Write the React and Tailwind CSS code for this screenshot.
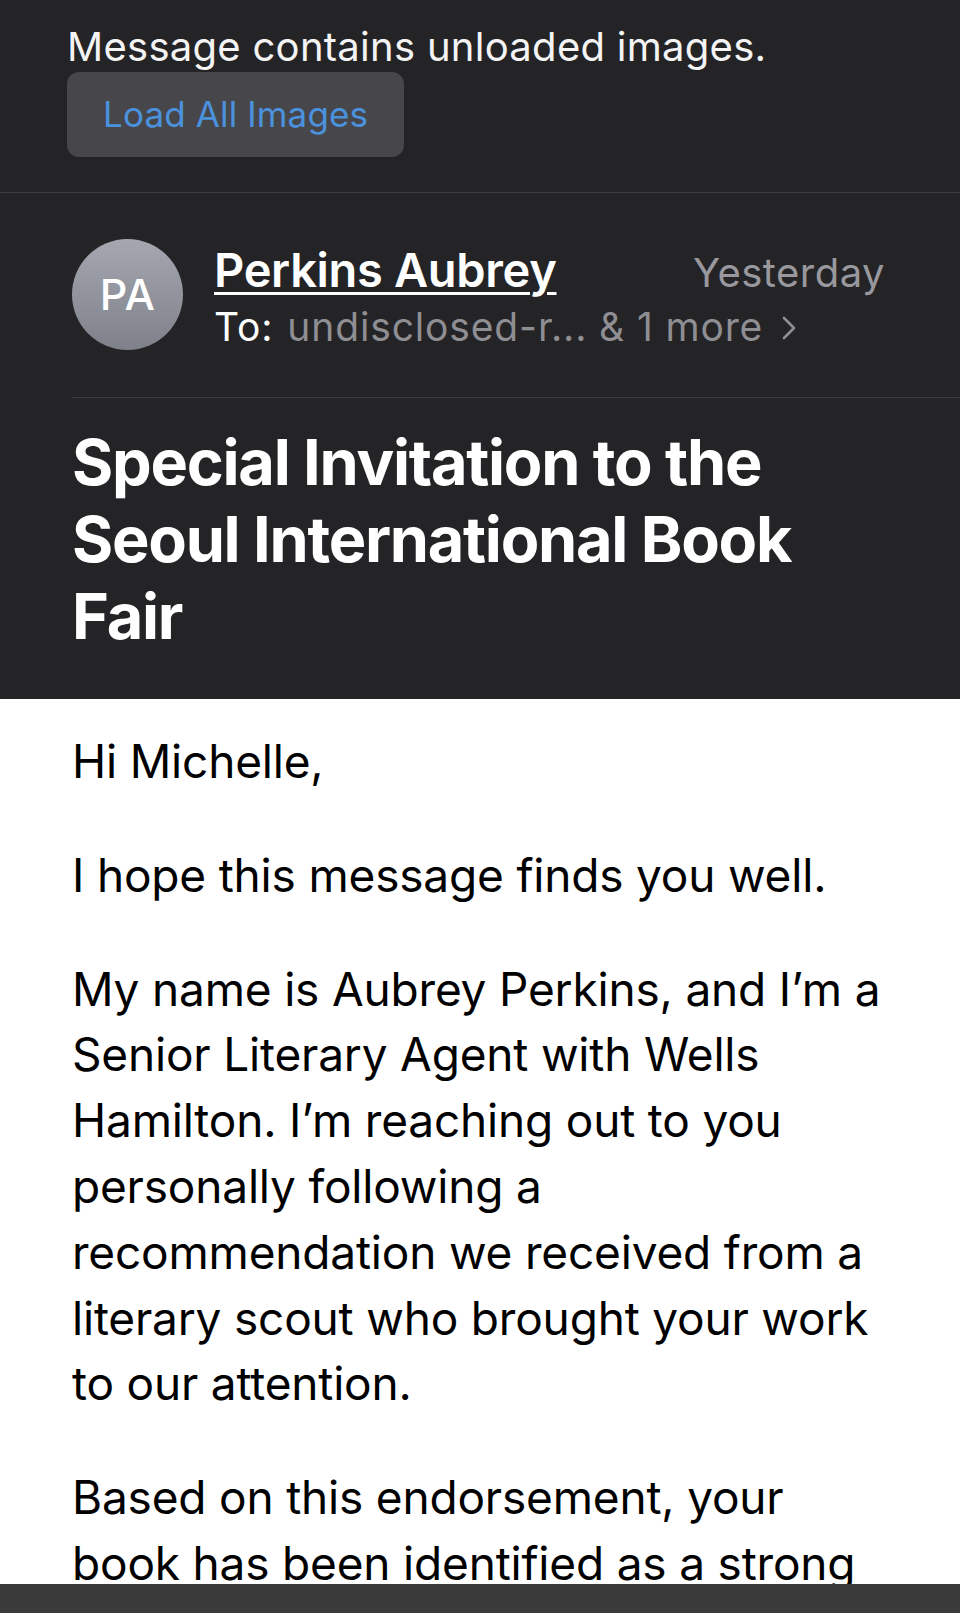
import React from "react";

function Chevron() {
  return (
    <svg width="16" height="24" viewBox="0 0 16 24" fill="none" className="shrink-0">
      <path d="M3 2 L13 12 L3 22" stroke="#8e8e93" strokeWidth="2.6" strokeLinecap="round" strokeLinejoin="round" />
    </svg>
  );
}

export default function App() {
  const font = { fontFamily: "Inter, 'Noto Sans', 'Liberation Sans', sans-serif" };
  return (
    <div className="relative w-[960px] h-[1613px] overflow-hidden bg-white" style={font}>
      <div className="bg-[#242426] text-white">
        {/* unloaded images banner */}
        <div className="pl-[67px] pt-[23px] pb-[35px]">
          <div className="text-[40px] leading-[48px] tracking-[0.007em] text-[#f4f4f5] whitespace-nowrap">
            Message contains unloaded images.
          </div>
          <div className="mt-px inline-flex h-[85px] items-center rounded-[12px] bg-[#47474b] pl-[36px] pr-[36px]">
            <span className="text-[35px] leading-none tracking-[0.004em] text-[#4b92de]">Load All Images</span>
          </div>
        </div>
        <div className="h-px bg-[#3c3c3f]" />

        {/* sender */}
        <div className="flex items-start pl-[72px] pr-[75px] pt-[46px] pb-[46px]">
          <div className="flex h-[111px] w-[111px] shrink-0 items-center justify-center rounded-full bg-gradient-to-b from-[#a5a8b0] to-[#7e818a]">
            <span className="text-[43px] font-medium leading-none text-white tracking-[0.01em]">PA</span>
          </div>
          <div className="ml-[31px] mt-[4px] flex-1 min-w-0">
            <div className="flex items-baseline justify-between">
              <span className="text-[47px] leading-[53px] font-semibold tracking-[-0.007em] text-white underline decoration-[3px] underline-offset-[5px] whitespace-nowrap">
                Perkins Aubrey
              </span>
              <span className="text-[40px] leading-[53px] tracking-[0.012em] text-[#98989e] whitespace-nowrap">Yesterday</span>
            </div>
            <div className="mt-[4px] flex items-center text-[39px] leading-[48px] tracking-[0.022em] whitespace-nowrap">
              <span className="text-white">To:</span>
              <span className="ml-[14px] text-[#8e8e93]">undisclosed-r... &amp; 1 more</span>
              <span className="ml-[18px] mt-[2px]"><Chevron /></span>
            </div>
          </div>
        </div>
        <div className="ml-[72px] h-px bg-[#3c3c3f]" />

        {/* subject */}
        <div className="pl-[72px] pt-[26px] pb-[44px]">
          <h1 className="text-[63px] leading-[77px] font-bold tracking-[-0.02em] text-white whitespace-nowrap">
            Special Invitation to the
            <br />
            Seoul International Book
            <br />
            Fair
          </h1>
        </div>
      </div>

      {/* body */}
      <div className="px-[72px] pt-[30px] text-[46px] leading-[65.8px] tracking-[-0.004em] text-black whitespace-nowrap">
        <p className="mb-[48px]">Hi Michelle,</p>
        <p className="mb-[48px]">I hope this message finds you well.</p>
        <p className="mb-[48px]">
          My name is Aubrey Perkins, and I’m a
          <br />
          Senior Literary Agent with Wells
          <br />
          Hamilton. I’m reaching out to you
          <br />
          personally following a
          <br />
          recommendation we received from a
          <br />
          literary scout who brought your work
          <br />
          to our attention.
        </p>
        <p>
          Based on this endorsement, your
          <br />
          book has been identified as a strong
        </p>
      </div>

      {/* bottom toolbar edge */}
      <div className="absolute bottom-0 left-0 right-0 h-[29px] bg-[#3a3a3a]" />
    </div>
  );
}
